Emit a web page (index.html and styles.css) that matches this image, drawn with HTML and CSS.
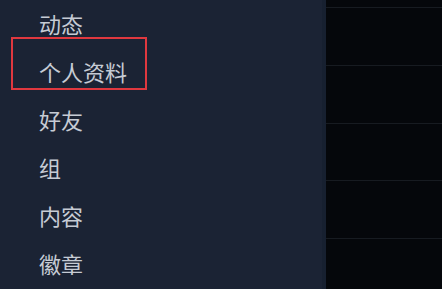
FILE: index.html
```html
<!DOCTYPE html>
<html lang="zh">
<head>
<meta charset="utf-8">
<link rel="stylesheet" href="styles.css">
</head>
<body>
<div class="layout">
  <nav class="sidebar">
    <ul class="menu">
      <li class="item">动态</li>
      <li class="item">个人资料</li>
      <li class="item">好友</li>
      <li class="item">组</li>
      <li class="item">内容</li>
      <li class="item">徽章</li>
    </ul>
    <div class="highlight"></div>
  </nav>
  <main class="content">
    <div class="row"></div>
    <div class="row"></div>
    <div class="row"></div>
    <div class="row"></div>
    <div class="row"></div>
  </main>
</div>
</body>
</html>
```

FILE: styles.css
```css
html, body {
  margin: 0;
  padding: 0;
  height: 100%;
  background: #05070b;
  overflow: hidden;
}
.layout {
  display: flex;
  height: 289px;
}
.sidebar {
  position: relative;
  width: 322px;
  flex: none;
  background: #1b2334;
  border-right: 4px solid #172030;
}
.menu {
  list-style: none;
  margin: -1px 0 0 0;
  padding: 0;
}
.item {
  height: 48px;
  line-height: 48px;
  padding-left: 39px;
  font-family: "Noto Sans CJK SC", "Noto Sans", sans-serif;
  font-size: 22px;
  color: #c6cbd4;
}
.highlight {
  position: absolute;
  left: 11px;
  top: 37px;
  width: 132px;
  height: 49px;
  border: 2px solid #e0383f;
}
.content {
  flex: 1;
  padding-top: 7px;
  box-sizing: border-box;
}
.row {
  height: 57.75px;
  box-sizing: border-box;
  border-top: 1px solid #171b21;
}
```
